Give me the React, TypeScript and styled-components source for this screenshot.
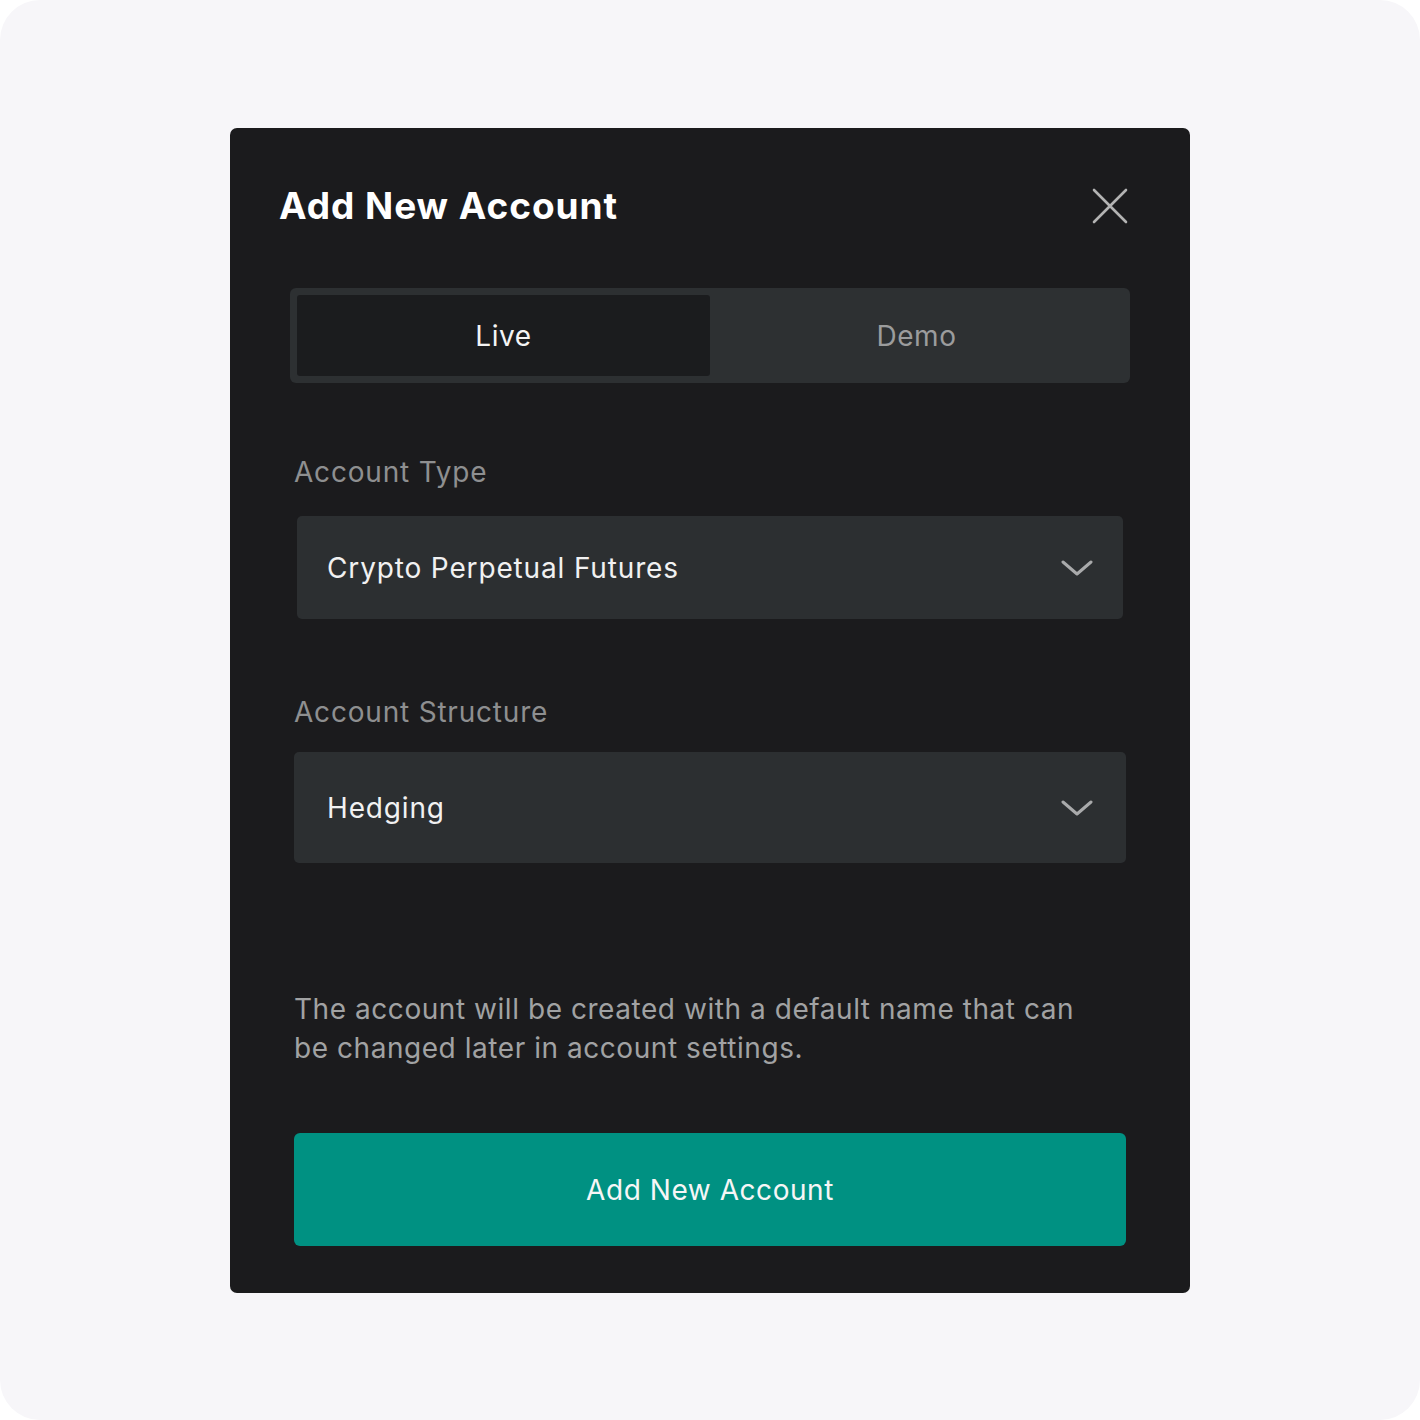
import React, { useState } from "react";
import styled, { createGlobalStyle } from "styled-components";

const Global = createGlobalStyle`
  html, body { margin: 0; padding: 0; background: #ffffff; }
  * { box-sizing: border-box; }
  body { font-family: Inter, "Noto Sans", sans-serif; -webkit-font-smoothing: antialiased; }
`;

const Frame = styled.div`
  width: 1420px;
  height: 1420px;
  background: #f7f6f9;
  border-radius: 40px;
  display: flex;
  justify-content: center;
  align-items: flex-start;
  padding-top: 128px;
`;

const Modal = styled.div`
  width: 960px;
  background: #1b1b1d;
  border-radius: 7px;
  padding: 56px 64px 47px 64px;
  display: flex;
  flex-direction: column;
`;

const Header = styled.div`
  display: flex;
  align-items: center;
  justify-content: space-between;
  margin: 0 -2px 0 -15px;
`;

const Title = styled.h2`
  margin: 0;
  font-size: 37px;
  line-height: 44px;
  font-weight: 700;
  letter-spacing: 0.95px;
  color: #ffffff;
`;

const CloseButton = styled.button`
  width: 36px;
  height: 36px;
  padding: 0;
  border: none;
  background: transparent;
  display: flex;
  align-items: center;
  justify-content: center;
  cursor: pointer;
`;

const Tabs = styled.div`
  margin: 60px -4px 0 -4px;
  height: 95px;
  padding: 7px;
  background: #2d3032;
  border-radius: 6px;
  display: grid;
  grid-template-columns: 1fr 1fr;
`;

const Tab = styled.button<{ $active?: boolean }>`
  border: none;
  border-radius: 3px;
  font-family: inherit;
  font-size: 28px;
  font-weight: 400;
  letter-spacing: 0.6px;
  background: ${(p) => (p.$active ? "#1b1c1e" : "transparent")};
  color: ${(p) => (p.$active ? "#f4f4f4" : "#9b9c9d")};
  cursor: pointer;
`;

const Label = styled.div<{ $gap: number }>`
  margin-top: ${(p) => p.$gap}px;
  font-size: 28px;
  line-height: 34px;
  letter-spacing: 0.8px;
  color: #8e8f90;
`;

const Select = styled.div<{ $gap: number; $height: number; $inset: number }>`
  margin: ${(p) => p.$gap}px ${(p) => p.$inset}px 0 ${(p) => p.$inset}px;
  height: ${(p) => p.$height}px;
  padding: 0 ${(p) => 33 - p.$inset}px;
  background: #2c2f31;
  border-radius: 5px;
  display: flex;
  align-items: center;
  justify-content: space-between;
  font-size: 28px;
  letter-spacing: 0.85px;
  color: #f1f1f1;
  cursor: pointer;
`;

const Description = styled.p`
  margin: 127px 0 0 0;
  max-width: 810px;
  font-size: 28px;
  line-height: 39px;
  letter-spacing: 0.55px;
  color: #a1a2a3;
`;

const SubmitButton = styled.button`
  margin-top: 65px;
  height: 113px;
  border: none;
  border-radius: 6px;
  background: #009182;
  color: #f6f6f6;
  font-family: inherit;
  font-size: 28px;
  font-weight: 400;
  letter-spacing: 0.55px;
  cursor: pointer;
`;

const Chevron = () => (
  <svg width="32" height="18" viewBox="0 0 32 18" fill="none">
    <polyline
      points="2,3 16,15 30,3"
      stroke="#a9aaab"
      strokeWidth="3"
      strokeLinecap="round"
      strokeLinejoin="round"
    />
  </svg>
);

const CloseIcon = () => (
  <svg width="36" height="36" viewBox="0 0 36 36" fill="none">
    <path d="M2 2 L34 34 M34 2 L2 34" stroke="#b3b3b3" strokeWidth="2.6" strokeLinecap="round" />
  </svg>
);

export default function App() {
  const [mode, setMode] = useState<"live" | "demo">("live");
  return (
    <>
      <Global />
      <Frame>
        <Modal>
          <Header>
            <Title>Add New Account</Title>
            <CloseButton aria-label="Close">
              <CloseIcon />
            </CloseButton>
          </Header>
          <Tabs>
            <Tab $active={mode === "live"} onClick={() => setMode("live")}>
              Live
            </Tab>
            <Tab $active={mode === "demo"} onClick={() => setMode("demo")}>
              Demo
            </Tab>
          </Tabs>
          <Label $gap={72}>Account Type</Label>
          <Select $gap={27} $height={103} $inset={3}>
            <span>Crypto Perpetual Futures</span>
            <Chevron />
          </Select>
          <Label $gap={76}>Account Structure</Label>
          <Select $gap={23} $height={111} $inset={0}>
            <span>Hedging</span>
            <Chevron />
          </Select>
          <Description>
            The account will be created with a default name that can be changed later in account
            settings.
          </Description>
          <SubmitButton>Add New Account</SubmitButton>
        </Modal>
      </Frame>
    </>
  );
}
